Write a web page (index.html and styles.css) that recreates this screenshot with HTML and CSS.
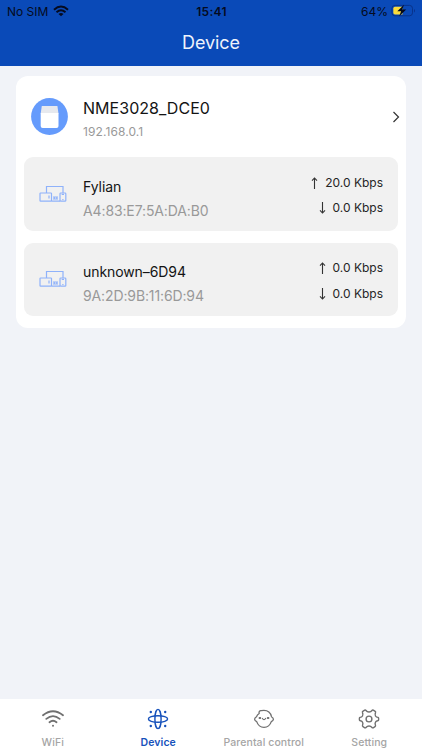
FILE: index.html
```
<!DOCTYPE html>
<html lang="en">
<head>
<meta charset="utf-8">
<title>Device</title>
<link rel="stylesheet" href="styles.css">
</head>
<body>
<svg width="0" height="0" class="defs">
  <symbol id="devices" viewBox="0 0 28 18">
    <g fill="none" stroke="#8fb2fa" stroke-width="1.2">
      <path d="M7.500 8V1.500H24V8"/>
      <rect x="1" y="8" width="11.500" height="8.200" rx=".6"/>
      <path d="M10 10.500v3M12.500 16.200H21M14 12h5M14 14h5M15.300 11.500v3M17.800 11.500v3"/>
      <rect x="21" y="8" width="5.800" height="8.200" rx=".8"/>
      <path d="M22.700 9.300h2.300M23.900 14v1"/>
    </g>
  </symbol>
</svg>
<header class="header">
  <div class="status">
    <div class="carrier"><span>No SIM</span>
      <svg width="16" height="12" viewBox="0 0 16 12" fill="none" stroke="#050b20" stroke-width="2"><path d="M1 4.700Q8-1.600 15 4.700M3.500 7.200Q8 3.200 12.500 7.200"/><path d="M8 11.300 5.500 8.900Q8 6.900 10.500 8.900Z" fill="#050b20" stroke="none"/></svg>
    </div>
    <div class="clock">15:41</div>
    <div class="power"><span>64%</span>
      <svg width="25" height="13" viewBox="0 0 25 13"><rect x=".9" y="1.400" width="20.600" height="10.400" rx="3" fill="none" stroke="#08328a"/><path d="M4 2.800h7.500v7.600H4Q2.300 10.400 2.300 8.700V4.500Q2.300 2.800 4 2.800Z" fill="#fbdc3c"/><path d="M23 5v3.500q1-.5 1-1.700T23 5Z" fill="#08328a"/><path d="M13 .8 6.300 7.200h3.800L8.200 12.200l7-6.700h-4Z" fill="#03091c"/></svg>
    </div>
  </div>
  <h1 class="title">Device</h1>
</header>
<main class="content">
  <section class="card">
    <div class="router">
      <svg class="avatar" width="37" height="37" viewBox="0 0 37 37"><circle cx="18.500" cy="18.500" r="18.400" fill="#659bfc"/><path d="M10.800 8h15.600l1.100 7.400H9.700Z" fill="#e7e9ee"/><path d="M9.700 15h17.800v13q0 2-2 2H11.700q-2 0-2-2Z" fill="#fff"/></svg>
      <div class="info">
        <div class="router-name">NME3028_DCE0</div>
        <div class="router-ip">192.168.0.1</div>
      </div>
      <svg class="chevron" width="8" height="12" viewBox="0 0 8 12" fill="none" stroke="#333" stroke-width="1.200"><path d="m1.500 1 5 5-5 5"/></svg>
    </div>
    <div class="client">
      <svg class="client-icon" width="28" height="18"><use href="#devices"/></svg>
      <div class="info">
        <div class="client-name">Fylian</div>
        <div class="client-mac">A4:83:E7:5A:DA:B0</div>
      </div>
      <div class="rates">
        <div><svg class="arrow" width="7" height="12" viewBox="0 0 7 12"><path d="M3.500 12V1M1 3.700 3.500 1 6 3.700"/></svg><span>20.0 Kbps</span></div>
        <div><svg class="arrow" width="7" height="12" viewBox="0 0 7 12"><path d="M3.500 0v11M1 8.300 3.500 11 6 8.300"/></svg><span>0.0 Kbps</span></div>
      </div>
    </div>
    <div class="client">
      <svg class="client-icon" width="28" height="18"><use href="#devices"/></svg>
      <div class="info">
        <div class="client-name">unknown–6D94</div>
        <div class="client-mac">9A:2D:9B:11:6D:94</div>
      </div>
      <div class="rates">
        <div><svg class="arrow" width="7" height="12" viewBox="0 0 7 12"><path d="M3.500 12V1M1 3.700 3.500 1 6 3.700"/></svg><span>0.0 Kbps</span></div>
        <div><svg class="arrow" width="7" height="12" viewBox="0 0 7 12"><path d="M3.500 0v11M1 8.300 3.500 11 6 8.300"/></svg><span>0.0 Kbps</span></div>
      </div>
    </div>
  </section>
</main>
<nav class="tabs">
  <div class="tab"><svg width="22" height="22" viewBox="0 0 22 22" stroke-width="1.800" stroke-linecap="round"><path d="M1 7.300Q11-.7 21 7.300M4.300 10.900Q11 5.400 17.700 10.900M7.500 14.200Q11 11.400 14.500 14.200"/><circle cx="11" cy="17.800" r="1" fill="currentColor" stroke="none"/></svg><span>WiFi</span></div>
  <div class="tab active"><svg width="22" height="22" viewBox="0 0 22 22" stroke-width="1.400"><ellipse cx="11" cy="11" rx="3.100" ry="9.600"/><ellipse cx="11" cy="11" rx="9.600" ry="3.300"/><g fill="currentColor" stroke="none"><circle cx="3.800" cy="4" r="1.200"/><circle cx="18.200" cy="4" r="1.200"/><circle cx="3.800" cy="18" r="1.200"/><circle cx="18.200" cy="18" r="1.200"/></g></svg><span>Device</span></div>
  <div class="tab"><svg width="22" height="22" viewBox="0 0 22 22" stroke-width="1.300" stroke-linejoin="round" stroke-linecap="round"><path d="M6.200 5.500C5.700 4 6.600 2.300 8.300 2.700 14 1.700 17.500 4.500 18.500 8.700Q20.500 10 20.400 11.300 20.200 12.700 18.300 13.600C17 17.500 14.500 19.300 11 19.300S5 17.500 3.700 13.600Q1.700 12.600 1.600 11.300 1.500 10 3.500 8.700 4.200 6.700 6.200 5.500Z"/><path d="M9.400 10.500q1.600 2.400 3.200 0"/><path d="M6.500 10h.8M14.700 10h.8" stroke-width="1.800"/></svg><span>Parental control</span></div>
  <div class="tab"><svg width="22" height="22" viewBox="0 0 22 22" stroke-width="1.400" stroke-linejoin="round"><path d="M8 2.500Q9 4 11 4T14 2.500Q14.500 1.800 15.300 2.200L17.200 3.400Q17.800 3.800 17.500 4.600 16.600 6.700 17.500 8 18.200 9.200 20 9.400 20.600 9.600 20.600 10.300V12Q20.500 12.700 19.800 12.800 18.200 13 17.500 14.200 16.700 15.500 17.500 17.500 17.700 18.200 17 18.700L15.200 19.800Q14.500 20.100 14 19.500 12.800 18 11 18T8 19.500Q7.500 20.100 6.800 19.800L5 18.700Q4.300 18.200 4.500 17.500 5.300 15.500 4.500 14.200 3.800 13 2.200 12.800 1.500 12.700 1.400 12V10.300Q1.400 9.600 2 9.400 3.800 9.200 4.500 8 5.400 6.700 4.500 4.600 4.200 3.800 4.800 3.400L6.700 2.200Q7.500 1.800 8 2.500Z"/><circle cx="11" cy="11" r="2.900"/></svg><span>Setting</span></div>
</nav>
</body>
</html>
```
FILE: styles.css
```
* { box-sizing: border-box; }
body { margin: 0; height: 750px; display: flex; flex-direction: column; background: #f1f3f8; font-family: Inter, "Liberation Sans", sans-serif; color: #141414; overflow: hidden; }
.defs { position: absolute; }
svg { display: block; flex: none; }
.header { height: 66px; background: #0a4ab8; }
.status { height: 23px; padding: 0 6px 0 7px; display: grid; grid-template-columns: 1fr auto 1fr; align-items: center; font-size: 12px; line-height: 23px; color: #050b20; }
.carrier, .power { display: flex; align-items: center; gap: 5px; }
.carrier svg, .power svg { margin-bottom: 2px; }
.power { justify-content: flex-end; gap: 3px; }
.power span { letter-spacing: 0; }
.clock { font-weight: 600; letter-spacing: .3px; }
.title { margin: 6px 0 0; font-size: 18px; line-height: 28px; font-weight: 400; text-align: center; letter-spacing: -.1px; color: #eef3fc; }
.content { flex: 1; padding: 10px 16px; }
.card { height: 252px; background: #fff; border-radius: 12px; padding: 0 8px; }
.router { height: 81px; display: flex; align-items: center; padding-left: 7px; }
.router .info { margin-left: 15px; padding-top: 6px; }
.info { flex: 1; white-space: nowrap; }
.router-name { font-size: 16px; line-height: 24px; letter-spacing: .03px; }
.router-ip { font-size: 12px; line-height: 24px; letter-spacing: .1px; color: #999; }
.chevron { margin-right: -2px; }
.client { height: 73.500px; display: flex; align-items: center; background: #f1f1f1; border-radius: 9px; padding: 0 15px; margin-bottom: 12px; }
.client .info { margin-left: 16px; padding-top: 10px; }
.client-name { font-size: 14px; line-height: 24px; letter-spacing: -.08px; }
.client-mac { font-size: 14px; line-height: 24px; letter-spacing: -.12px; color: #999; }
.rates { display: flex; flex-direction: column; align-items: flex-end; padding-top: 3px; font-size: 12px; line-height: 25.500px; color: #252525; }
.rates div { display: flex; align-items: center; gap: 7px; }
.arrow { fill: none; stroke: #333; stroke-width: 1.100; }
.tabs { height: 51px; background: #fff; display: grid; grid-template-columns: repeat(4, 1fr); }
.tab { display: flex; flex-direction: column; align-items: center; padding-top: 9px; font-size: 10.500px; line-height: 14px; font-weight: 500; letter-spacing: .08px; color: #a5a5a5; }
.tab span { margin-top: 6px; }
.tab svg { fill: none; stroke: #707070; color: #707070; }
.tab.active { color: #1651bb; font-weight: 600; }
.tab.active svg { stroke: #1651bb; color: #1651bb; }
```
